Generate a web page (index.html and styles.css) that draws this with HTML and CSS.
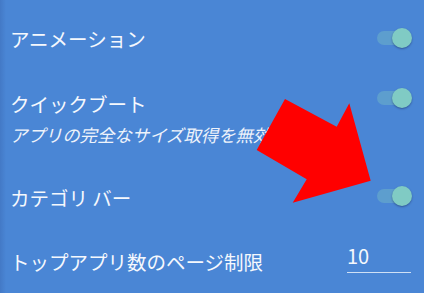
FILE: index.html
```html
<!DOCTYPE html>
<html lang="ja">
<head>
<meta charset="utf-8">
<link rel="stylesheet" href="styles.css">
</head>
<body>
<div class="screen">
  <div class="row row-anim">
    <div class="text"><div class="title">アニメーション</div></div>
    <div class="switch"><span class="track"></span><span class="thumb"></span></div>
  </div>
  <div class="row row-boot">
    <div class="text">
      <div class="title">クイックブート</div>
      <div class="summary">アプリの完全なサイズ取得を無効化</div>
    </div>
    <div class="switch"><span class="track"></span><span class="thumb"></span></div>
  </div>
  <div class="row row-cat">
    <div class="text"><div class="title">カテゴリ バー</div></div>
    <div class="switch"><span class="track"></span><span class="thumb"></span></div>
  </div>
  <div class="row row-top">
    <div class="text"><div class="title">トップアプリ数のページ制限</div></div>
    <div class="field">10</div>
  </div>
  <svg class="arrow" width="424" height="293" viewBox="0 0 424 293">
    <polygon points="285,99 336.7,126.7 349.3,103.3 370.7,180.7 292.7,202.7 306.7,179.3 256.7,150" fill="#ff0000"/>
  </svg>
</div>
</body>
</html>
```

FILE: styles.css
```css
* { box-sizing: border-box; }
html, body { margin: 0; padding: 0; }
body {
  width: 424px;
  height: 293px;
  overflow: hidden;
  background: #4a86d5;
  font-family: "Noto Sans CJK JP", "Noto Sans", sans-serif;
  color: #f5f8fd;
}
.screen {
  position: relative;
  width: 424px;
  height: 293px;
  background: linear-gradient(to right, #4379c6 0, #4a86d5 6px);
  display: flex;
  flex-direction: column;
}
.row {
  display: flex;
  align-items: center;
  padding: 0 10px 0 10px;
}
.text { flex: 1; min-width: 0; }
.title {
  font-size: 19.5px;
  line-height: 26px;
  white-space: nowrap;
}
.summary {
  font-size: 17.4px;
  line-height: 24px;
  font-style: italic;
  white-space: nowrap;
  margin-top: 6px;
  color: #eef3fb;
}
.row-anim { height: 78px; }
.row-boot { height: 88px; align-items: flex-start; padding-top: 13px; }
.row-boot .switch { margin-top: -3px; }
.row-cat { height: 64px; }
.row-cat .switch { margin-top: -4px; }
.row-top { height: 63px; }
.row-anim .switch { margin-top: -2px; }
.switch {
  position: relative;
  width: 35px;
  height: 20px;
  margin-right: 2px;
  flex: none;
}
.track {
  position: absolute;
  left: 0;
  top: 3px;
  width: 34px;
  height: 14px;
  border-radius: 7px;
  background: rgba(128, 203, 196, 0.35);
}
.thumb {
  position: absolute;
  right: 0;
  top: 0;
  width: 20px;
  height: 20px;
  border-radius: 50%;
  background: #80cbc4;
  box-shadow: 0 1px 2px rgba(0, 0, 40, 0.35);
}
.field {
  width: 64px;
  margin-right: 3px;
  font-size: 20px;
  line-height: 20px;
  padding: 0 0 6px 0;
  border-bottom: 1px solid #cfe0f5;
  margin-top: -4px;
}
.arrow {
  position: absolute;
  left: 0;
  top: 0;
}
```
